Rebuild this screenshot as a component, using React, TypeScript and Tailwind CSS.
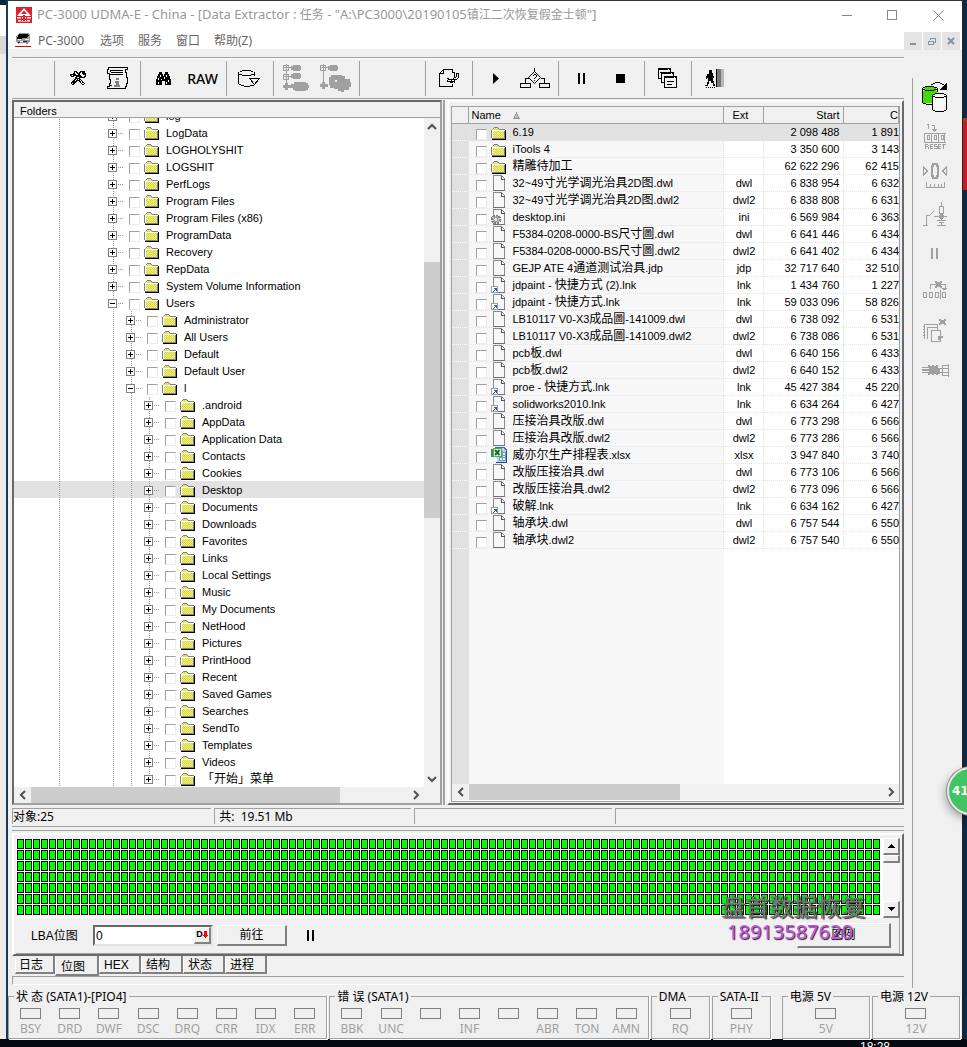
import React, { useState } from 'react';

type TreeItem = { name: string, depth: number, open?: boolean };
type FileItem = { name: string, kind: 'folder' | 'file' | 'link' | 'ini' | 'xls', ext: string, start: string, c: string };

const root = ['log', 'LogData', 'LOGHOLYSHIT', 'LOGSHIT', 'PerfLogs', 'Program Files', 'Program Files (x86)', 'ProgramData', 'Recovery', 'RepData', 'System Volume Information'];
const users = ['Administrator', 'All Users', 'Default', 'Default User'];
const profile = ['.android', 'AppData', 'Application Data', 'Contacts', 'Cookies', 'Desktop', 'Documents', 'Downloads', 'Favorites', 'Links', 'Local Settings', 'Music', 'My Documents', 'NetHood', 'Pictures', 'PrintHood', 'Recent', 'Saved Games', 'Searches', 'SendTo', 'Templates', 'Videos', '「开始」菜单'];

const tree: TreeItem[] = [
  ...root.map((name) => ({ name, depth: 0 })),
  { name: 'Users', depth: 0, open: true },
  ...users.map((name) => ({ name, depth: 1 })),
  { name: 'l', depth: 1, open: true },
  ...profile.map((name) => ({ name, depth: 2 })),
];

const files: FileItem[] = [
  { name: '6.19', kind: 'folder', ext: '', start: '2 098 488', c: '1 891' },
  { name: 'iTools 4', kind: 'folder', ext: '', start: '3 350 600', c: '3 143' },
  { name: '精雕待加工', kind: 'folder', ext: '', start: '62 622 296', c: '62 415' },
  { name: '32~49寸光学调光治具2D图.dwl', kind: 'file', ext: 'dwl', start: '6 838 954', c: '6 632' },
  { name: '32~49寸光学调光治具2D图.dwl2', kind: 'file', ext: 'dwl2', start: '6 838 808', c: '6 631' },
  { name: 'desktop.ini', kind: 'ini', ext: 'ini', start: '6 569 984', c: '6 363' },
  { name: 'F5384-0208-0000-BS尺寸圖.dwl', kind: 'file', ext: 'dwl', start: '6 641 446', c: '6 434' },
  { name: 'F5384-0208-0000-BS尺寸圖.dwl2', kind: 'file', ext: 'dwl2', start: '6 641 402', c: '6 434' },
  { name: 'GEJP ATE 4通道测试治具.jdp', kind: 'file', ext: 'jdp', start: '32 717 640', c: '32 510' },
  { name: 'jdpaint - 快捷方式 (2).lnk', kind: 'link', ext: 'lnk', start: '1 434 760', c: '1 227' },
  { name: 'jdpaint - 快捷方式.lnk', kind: 'link', ext: 'lnk', start: '59 033 096', c: '58 826' },
  { name: 'LB10117 V0-X3成品圖-141009.dwl', kind: 'file', ext: 'dwl', start: '6 738 092', c: '6 531' },
  { name: 'LB10117 V0-X3成品圖-141009.dwl2', kind: 'file', ext: 'dwl2', start: '6 738 086', c: '6 531' },
  { name: 'pcb板.dwl', kind: 'file', ext: 'dwl', start: '6 640 156', c: '6 433' },
  { name: 'pcb板.dwl2', kind: 'file', ext: 'dwl2', start: '6 640 152', c: '6 433' },
  { name: 'proe - 快捷方式.lnk', kind: 'link', ext: 'lnk', start: '45 427 384', c: '45 220' },
  { name: 'solidworks2010.lnk', kind: 'link', ext: 'lnk', start: '6 634 264', c: '6 427' },
  { name: '压接治具改版.dwl', kind: 'file', ext: 'dwl', start: '6 773 298', c: '6 566' },
  { name: '压接治具改版.dwl2', kind: 'file', ext: 'dwl2', start: '6 773 286', c: '6 566' },
  { name: '威亦尔生产排程表.xlsx', kind: 'xls', ext: 'xlsx', start: '3 947 840', c: '3 740' },
  { name: '改版压接治具.dwl', kind: 'file', ext: 'dwl', start: '6 773 106', c: '6 566' },
  { name: '改版压接治具.dwl2', kind: 'file', ext: 'dwl2', start: '6 773 096', c: '6 566' },
  { name: '破解.lnk', kind: 'link', ext: 'lnk', start: '6 634 162', c: '6 427' },
  { name: '轴承块.dwl', kind: 'file', ext: 'dwl', start: '6 757 544', c: '6 550' },
  { name: '轴承块.dwl2', kind: 'file', ext: 'dwl2', start: '6 757 540', c: '6 550' },
];

// Chinese runs stay at 12px whatever the Latin around them is
const Mixed = ({ text }: { text: string }) => (
  <>
    {text.split(/([\u3000-\u9fff]+)/).map((part, i) =>
      i % 2 ? <span key={i} className="text-[12px]">{part}</span> : part
    )}
  </>
);

const Ico = ({ w, h, children }: { w: number, h: number, children: React.ReactNode }) => (
  <svg width={w} height={h} viewBox={`0 0 ${w} ${h}`} fill="none" stroke="currentColor" shapeRendering="crispEdges" className="shrink-0" aria-hidden="true">
    {children}
  </svg>
);

const Folder = () => (
  <Ico w={15} h={13}>
    <path d="M1 2h1V1h5v1h1v1h6v9H1z" fill="url(#dither)" stroke="none" />
    <path d="M.5 11V2.500M2 1.500h1M3 .500h4M7 1.500h1M8 2.500h6M13.500 3v8M1 11.500h13" stroke="#808080" />
    <path d="M1.500 11V3.500h12" stroke="#fff" />
    <path d="M14.500 3v10M1 12.500h14" stroke="#000" />
  </Ico>
);

const FileIcon = ({ kind }: { kind: FileItem['kind'] }) => {
  if (kind === 'folder') return <Folder />;
  if (kind === 'xls') return (
    <Ico w={16} h={16}>
      <path d="M4 .5h9l2.500 2.500v12H6" fill="#b9d3f3" stroke="#3c6ea8" />
      <path d="M5 15.500h11M15.500 4v12" stroke="#1f4e88" />
      <path d="M8 5h6v8H8z" fill="#eaf3ff" stroke="#6f9ad0" />
      <path d="M11 4v9M8 8h6M8 10.500h6" stroke="#6f9ad0" />
      <path d="M0 2h3v8H0z" fill="#2f9a3f" stroke="none" />
      <path d="M2.500 1.500h8v8h-8z" fill="#e9f7e9" stroke="#5aa865" />
      <path d="M4 3l4.500 5M8.500 3L4 8" stroke="#17702a" strokeWidth="2" shapeRendering="auto" />
    </Ico>
  );
  return (
    <Ico w={15} h={16}>
      <path d="M2.500 .5h8l3 3v12h-11z" fill="#f7f7f7" stroke="#8a8a8a" />
      <path d="M10.500 1v3h3" stroke="#555" />
      <path d="M2 15.500h12" stroke="#707070" />
      {kind === 'link' && (
        <>
          <path d="M.5 9.500h6v6h-6z" fill="#fff" stroke="#a0a0a0" />
          <path d="M2 14h1v-1h1v-1H3v-1h3v3H5v-1H4v1H3v1H2z" fill="#1f5fb4" stroke="none" />
        </>
      )}
      {kind === 'ini' && (
        <>
          <circle cx="5" cy="10.500" r="4" fill="#ccc" stroke="#808080" strokeWidth="2" strokeDasharray="2 1" />
          <circle cx="5" cy="10.500" r="2" fill="#e8e8e8" stroke="#999" />
        </>
      )}
    </Ico>
  );
};

const Check = ({ label }: { label: string }) => (
  <input type="checkbox" aria-label={label} className="appearance-none shrink-0 w-[11px] h-[11px] bg-white border border-t-[#a0a0a0] border-l-[#a0a0a0] border-b-[#ececec] border-r-[#ececec] checked:bg-gray-500" />
);

const TreeRow = ({ item, odd, last, selected, onSelect }: { item: TreeItem, odd: boolean, last: boolean, selected: boolean, onSelect: () => void }) => {
  const dash = odd ? 1 : 0;
  return (
    <div onClick={onSelect} className={`flex items-end h-[17px] shrink-0 whitespace-nowrap ${selected ? 'bg-[#e2e2e2]' : ''}`}>
      <Ico w={94} h={17}>
        <path d="M45.500 0v17" stroke="#999" strokeDasharray="1 1" strokeDashoffset={dash} />
      </Ico>
      {Array.from({ length: item.depth }, (_, i) => (
        <Ico key={i} w={18} h={17}>
          <path d="M5.500 0v17" stroke="#999" strokeDasharray="1 1" strokeDashoffset={dash} />
        </Ico>
      ))}
      <Ico w={21} h={17}>
        <path d={last ? 'M5.500 0v9' : 'M5.500 0v17'} stroke="#999" strokeDasharray="1 1" strokeDashoffset={dash} />
        <path d="M10 9.500h6" stroke="#999" strokeDasharray="1 1" />
        <path d="M.5 5.500h8v8h-8z" fill="#fff" stroke="#808080" />
        <path d={item.open ? 'M2 9.500h5' : 'M2 9.500h5M4.500 7v5'} stroke="#000" />
      </Ico>
      <div className="flex items-end gap-1 pb-px">
        <Check label={item.name} />
        <Folder />
      </div>
      <span className="h-4 leading-4 pl-[7px]"><Mixed text={item.name} /></span>
    </div>
  );
};

const Chevron = ({ dir }: { dir: 'up' | 'down' | 'left' | 'right' }) => {
  const d = { up: 'M1 7l4-4 4 4', down: 'M1 3l4 4 4-4', left: 'M7 1L3 5l4 4', right: 'M3 1l4 4-4 4' }[dir];
  return (
    <svg width="10" height="10" viewBox="0 0 10 10" fill="none" stroke="#505050" strokeWidth="2" aria-hidden="true"><path d={d} /></svg>
  );
};

const HScroll = ({ thumb }: { thumb: string }) => (
  <div className="flex h-4 shrink-0 bg-[#f0f0f0]">
    <button aria-label="scroll left" className="w-[17px] flex items-center justify-center"><Chevron dir="left" /></button>
    <div className="flex-1"><div className={`h-full bg-[#cdcdcd] ${thumb}`} /></div>
    <button aria-label="scroll right" className="w-[17px] flex items-center justify-center"><Chevron dir="right" /></button>
  </div>
);

const Tool = ({ label, children }: { label: string, children: React.ReactNode }) => (
  <button aria-label={label} className="w-[39px] h-[35px] flex items-center justify-center">{children}</button>
);

const Section = ({ children }: { children?: React.ReactNode }) => (
  <div className="flex h-[35px] pl-[3px] pr-1 border-r border-[#a0a0a0] shrink-0">{children}</div>
);

const Toolbar = () => (
  <div className="flex items-center h-[42px] shrink-0 border-y border-[#a0a0a0] shadow-[inset_0_1px_0_#fff] overflow-hidden">
    <div className="w-[43px] h-[35px] border-r border-[#a0a0a0] shrink-0" />
    <Section>
      <Tool label="Tools">
        <Ico w={16} h={15}>
          <path d="M4 0h2v1h1v1h1v1h1v1H7v1H6V4H5V3H4v1H3v1H1V4H0V3h3V2h1zM9 1h1V0h4v1h-2v1h1v1h1V2h1v3h-1v1h-3V5h-1V4H9z" fill="#f0f0f0" strokeWidth="1" />
          <path d="M6 5.500l8 8M9.500 5.500l-8 8" strokeWidth="3" />
          <path d="M7 6.500l6.500 6.500M8.500 6.500L2 13" stroke="#f0f0f0" strokeWidth="1" strokeDasharray="1 1" />
        </Ico>
      </Tool>
      <Tool label="Task info">
        <Ico w={22} h={22}>
          <path d="M4 .5h17.500v2h-2v3h1v5h1v6h-1v3h-1v2H1.500v-2h2v-3h1v-4h-1v-6h-2v-4h1v-2z" fill="#f0f0f0" />
          <path d="M4 3.500h13M5 5.500h12M4 7.500h13" />
          <path d="M10 11h3v2h-3zM9 14h4v4h1v2H8v-2h2v-2H9z" fill="#808080" stroke="none" />
          <path d="M3 18.500h3M4 3v2" />
        </Ico>
      </Tool>
    </Section>
    <Section>
      <Tool label="Find">
        <Ico w={15} h={13}>
          <path d="M3 0h3v2h1v2h1V2h1V0h3v2h1v2h1v3h1v6H9V9H6v4H0V7h1V4h1V2h1z" fill="#000" stroke="none" />
          <path d="M2.500 6v2M4.500 3v2M2.500 10v2M10.500 3v2M8.500 5v2M12.500 8v2M10.500 10v2M5.500 7v1" stroke="#fff" />
        </Ico>
      </Tool>
      <button className="w-[39px] h-[35px] flex items-center justify-center font-['Noto_Sans',sans-serif] text-[14px] font-medium">RAW</button>
    </Section>
    <Section>
      <Tool label="Disk image">
        <Ico w={23} h={17}>
          <path d="M4 .5h9M2 1.500h2M13 1.500h2M.5 2v12M1 4.500h3M4 5.500h9M13 4.500h3M16.500 2v4M1 14.500h2M3 15.500h3M6 16.500h6M12 15.500h4" />
          <path d="M11.500 8.500h10l-5 6z" fill="#f0f0f0" />
        </Ico>
      </Tool>
    </Section>
    <Section>
      <Tool label="Expand map">
        <Ico w={27} h={28}>
          <g stroke="#a0a0a0">
            <path d="M3.500 0v20M0 3.500h8M0 12.500h8" /><path d="M.5 1.500h5v5h-5zM.5 10.500h5v5h-5z" />
            <path d="M8 2h2V1h7v1h1v4h-1v1h-7V6H8zM8 10h2V9h7v1h1v4h-1v1h-7v-1H8zM2 19h3v2h3v-1h3v-2h12v1h2v2h1v3h-1v2h-2v1H12v-1h-2v-2H5v2H2v-2H0v-3h2z" fill="#a0a0a0" stroke="none" />
          </g>
        </Ico>
      </Tool>
      <Tool label="Build map">
        <Ico w={32} h={28}>
          <g stroke="#a0a0a0">
            <path d="M3.500 0v20M0 3.500h8" /><path d="M.5 1.500h5v5h-5z" />
            <path d="M8 2h2V1h7v1h1v4h-1v1h-7V6H8zM2 18h3v2h3v3H5v2H2v-2H0v-3h2zM9 13h2v-2h11v1h3v3h5v3h1v5h-2v3h-5v2h-3v-1h-3v-2h-4v-1h-4v-3h-1z" fill="#a0a0a0" stroke="none" />
            <path d="M15 16h2v2h-2z" fill="#f0f0f0" stroke="none" />
          </g>
        </Ico>
      </Tool>
    </Section>
    <div className="w-[66px] h-[35px] border-r border-[#a0a0a0] shrink-0" />
    <Section>
      <Tool label="Export">
        <Ico w={20} h={19}>
          <path d="M4.500 .5h9v3h2v4M4.500 .5l-4 4v13h13v-3M.5 4.500h4v-4" />
          <path d="M17.500 4.500h2v4l-2 2h-2v3l-3-2v-1h2v-1l3-2z" fill="#f0f0f0" />
          <path d="M7.500 9.500h2v1h2M8.500 10.500v2h4M11.500 12.500v1h2" />
        </Ico>
      </Tool>
    </Section>
    <Section>
      <Tool label="Start">
        <Ico w={6} h={11}><path d="M0 0l6 5.500L0 11z" fill="#000" stroke="none" shapeRendering="auto" /></Ico>
      </Tool>
      <Tool label="Logic">
        <Ico w={30} h={21}>
          <path d="M14.500 0v4M.5 15.500h10v4H.5zM19.500 15.500h10v4h-10zM5.500 15v-5h4M24.500 15v-5h-4" />
          <path d="M14.500 3.500l6 6-6 6-6-6z" shapeRendering="auto" />
          <path d="M13 7.500h1M14 6.500h2M16.500 7v2M15 9.500h1M14.500 10v1M14.500 12v1" />
        </Ico>
      </Tool>
    </Section>
    <Section>
      <Tool label="Pause"><Ico w={8} h={11}><path d="M0 0h2v11H0zM5 0h2v11H5z" fill="#000" stroke="none" /></Ico></Tool>
      <Tool label="Stop"><Ico w={9} h={9}><path d="M0 0h9v9H0z" fill="#000" stroke="none" /></Ico></Tool>
    </Section>
    <Section>
      <Tool label="Windows">
        <Ico w={19} h={20}>
          <path d="M.5 .5h12v10H.5z" fill="#f0f0f0" /><path d="M1 1.500h11" /><path d="M10 1h1v1h-1z" fill="#fff" stroke="none" /><path d="M2 4.500h1" />
          <path d="M3.500 4.500h12v10h-12z" fill="#f0f0f0" /><path d="M4 5.500h11" /><path d="M13 5h1v1h-1z" fill="#fff" stroke="none" />
          <path d="M6.500 8.500h12v11h-12z" fill="#f0f0f0" /><path d="M7 9.500h11" /><path d="M16 9h1v1h-1z" fill="#fff" stroke="none" />
          <path d="M9 13.500h7M9 16.500h5" />
        </Ico>
      </Tool>
    </Section>
    <div className="pl-[3px]">
      <Tool label="Exit">
        <Ico w={19} h={19}>
          <path d="M4 1h3v3h1v3h1v2H8v3h1v3h1v2H8v-3H6v-2H4v3H3v2H0v-1h2v-3h1V9H2v1H1V7h1V5h2z" fill="#000" stroke="none" />
          <path d="M12 0h4v18h-4z" fill="#777" stroke="none" />
          <path d="M16 0h3v18h-3z" fill="#b8b8b8" stroke="none" />
          <path d="M1 18.500h9" strokeDasharray="1 1" />
          <path d="M11.500 0v18" />
        </Ico>
      </Tool>
    </div>
  </div>
);

const FoldersPanel = () => {
  const [selected, setSelected] = useState('Desktop');
  return (
    <div className="flex-[426] min-w-0 flex flex-col bg-white border-2 border-t-[#696969] border-l-[#696969] border-r-[#a0a0a0] border-b-[#a0a0a0]">
      <div className="h-4 leading-[18px] pl-[6px] shrink-0 bg-[#f0f0f0] border-b border-[#a0a0a0]">Folders</div>
      <div className="flex-1 min-h-0 flex">
        <div className="flex-1 min-w-0 overflow-hidden flex flex-col justify-end">
          {tree.map((item, i) => (
            <TreeRow key={item.name} item={item} odd={i % 2 === 1} last={i === tree.length - 1} selected={selected === item.name} onSelect={() => setSelected(item.name)} />
          ))}
        </div>
        <div className="w-4 shrink-0 bg-[#f0f0f0] flex flex-col">
          <button aria-label="scroll up" className="h-[17px] flex items-center justify-center"><Chevron dir="up" /></button>
          <div className="flex-1 flex flex-col">
            <div className="flex-[127]" />
            <div className="flex-[255] bg-[#cdcdcd]" />
            <div className="flex-[252]" />
          </div>
          <button aria-label="scroll down" className="h-[17px] flex items-center justify-center"><Chevron dir="down" /></button>
        </div>
      </div>
      <div className="pr-4 bg-[#f0f0f0]"><HScroll thumb="w-[82%]" /></div>
    </div>
  );
};

const head = 'h-[17px] p-0 font-normal bg-[#f0f0f0] border-r border-b border-[#a0a0a0] leading-[16px]';
const cell = 'p-0 h-[17px] border-b border-r border-dotted border-[#e4e4e4] leading-[16px]';

const FilesPanel = () => (
  <div className="flex-[448] min-w-0 flex flex-col border-2 border-l-white border-t-white border-r-[#696969] border-b-[#696969] pt-1 pb-px pl-[2px] pr-[2px]">
    <div className="flex-1 min-h-0 flex flex-col border border-[#a0a0a0] bg-white overflow-hidden pb-px">
      <div className="flex-1 min-h-0 overflow-hidden">
        <table className="table-fixed w-full h-full border-separate border-spacing-0 whitespace-nowrap">
          <colgroup>
            <col className="w-[17px]" /><col className="w-[255px]" /><col className="w-[40px]" /><col className="w-[80px]" /><col />
          </colgroup>
          <thead>
            <tr>
              <th className={head} aria-label="marker"></th>
              <th className={`${head} text-left pl-[2px]`}>
                <span className="flex items-center gap-3">Name
                  <Ico w={7} h={7}><path d="M3.500 1L6 6H1z" fill="#c0c0c0" stroke="#909090" /></Ico>
                </span>
              </th>
              <th className={`${head} text-left pl-2`}>Ext</th>
              <th className={`${head} text-right pr-1`}>Start</th>
              <th className={`${head} text-right`}>C</th>
            </tr>
          </thead>
          <tbody>
            {files.map((f, i) => {
              const tone = i === 0 ? 'bg-[#e2e2e2]' : '';
              return (
                <tr key={f.name} className={tone}>
                  <td className={`${cell} bg-[#e1e1e1] border-b-white`}></td>
                  <td className={`${cell} ${i ? 'bg-[#f7f7f7]' : ''}`}>
                    <div className="flex items-end h-4 pl-[7px]">
                      <Check label={f.name} />
                      <span className="w-[21px] pl-1 flex"><FileIcon kind={f.kind} /></span>
                      <span className="pl-1 h-4"><Mixed text={f.name} /></span>
                    </div>
                  </td>
                  <td className={`${cell} text-center`}>{f.ext}</td>
                  <td className={`${cell} text-right pr-1`}>{f.start}</td>
                  <td className="p-0 h-[17px] border-b border-dotted border-[#e4e4e4] leading-[16px] text-right">{f.c}</td>
                </tr>
              );
            })}
            <tr>
              <td className="p-0 bg-[#e1e1e1]"></td>
              <td className="p-0 bg-[#f7f7f7]"></td>
              <td className="p-0 h-full" colSpan={3}></td>
            </tr>
          </tbody>
        </table>
      </div>
      <HScroll thumb="w-[51%]" />
    </div>
  </div>
);

const raised = 'bg-[#f0f0f0] border-t border-l border-b-2 border-r-2 border-t-white border-l-white border-b-[#808080] border-r-[#808080]';

const MapPanel = () => (
  <div className="shrink-0 mt-[2px] border-2 border-t-white border-l-white border-r-[#696969] border-b-[#696969] pl-[2px] pr-[2px] pt-[3px]">
    <div className="flex h-20 bg-white">
      {/* one cell per block of sectors */}
      <svg className="flex-1 min-w-0 h-[79px]" shapeRendering="crispEdges" aria-label="sector map">
        <defs>
          <pattern id="sector" width="8" height="11" patternUnits="userSpaceOnUse">
            <rect x="1" y="1" width="7" height="10" fill="#000" />
            <rect x="2" y="2" width="5" height="8" fill="#0f0" />
          </pattern>
        </defs>
        <rect width="865" height="77" fill="url(#sector)" />
      </svg>
      <div className="w-[17px] flex flex-col bg-[#f7f7f7]">
        <button aria-label="map up" className={`h-[17px] flex items-center justify-center ${raised}`}><Ico w={7} h={4}><path d="M3 0h1v1h1v1h1v1h1v1H0V3h1V2h1V1h1z" fill="#000" stroke="none" /></Ico></button>
        <div className={`h-2 ${raised}`} />
        <div className="flex-1" />
        <button aria-label="map down" className={`h-[17px] flex items-center justify-center ${raised}`}><Ico w={7} h={4}><path d="M0 0h7v1H6v1H5v1H4v1H3V3H2V2H1V1H0z" fill="#000" stroke="none" /></Ico></button>
      </div>
    </div>
    <div className="h-9 flex items-center border-b border-r border-[#a0a0a0] pl-[15px]">
      <label htmlFor="lba" className="w-[62px] text-[12px]">LBA位图</label>
      <div className="flex w-[120px] h-[21px] border-2 border-t-[#696969] border-l-[#696969] border-r-[#e3e3e3] border-b-[#e3e3e3] bg-white">
        <input id="lba" defaultValue="0" className="flex-1 min-w-0 pl-px text-[12px] leading-4 outline-none bg-white" />
        <button aria-label="decimal" className={`w-[17px] flex items-center justify-center text-[9px] font-black ${raised}`}>
          D<Ico w={5} h={8}><path d="M1 0h3v4h1v1H4v1H3v1H2V6H1V5H0V4h1z" fill="#f00" stroke="none" /></Ico>
        </button>
      </div>
      <button className={`ml-1 w-[70px] h-[21px] text-[12px] leading-4 ${raised}`}>前往</button>
      <button aria-label="pause map" className="ml-5 h-5 w-2 flex items-center"><Ico w={8} h={11}><path d="M0 0h2v11H0zM5 0h2v11H5z" fill="#000" stroke="none" /></Ico></button>
      <button className={`ml-auto mr-2 w-[94px] h-[25px] text-[12px] leading-4 ${raised}`}>图例</button>
    </div>
  </div>
);

const tabs = ['日志', '位图', 'HEX', '结构', '状态', '进程'];

const Tabs = () => {
  const [active, setActive] = useState('位图');
  return (
    <div role="tablist" className="flex items-start h-5 shrink-0 pl-[3px] text-[12px] leading-4">
      {tabs.map((t) => (
        <button
          key={t}
          role="tab"
          aria-selected={t === active}
          onClick={() => setActive(t)}
          className={`text-left border-l border-r-2 border-b-2 border-l-white border-r-[#808080] border-b-[#808080] ${t === active ? 'w-11 h-5 pt-[3px] pl-[5px] bg-[#f0f0f0]' : t === '日志' ? 'w-10 h-[18px] pt-px pl-[3px] border-r-0' : 'w-[42px] h-[18px] pt-px pl-1'}`}
        >
          {t}
        </button>
      ))}
    </div>
  );
};

const Leds = ({ title, names, className }: { title: string, names: string[], className: string }) => (
  <fieldset className={`min-w-0 h-[51px] border border-[#a0a0a0] shadow-[1px_1px_0_#fff] px-[2px] ${className}`}>
    <legend className="ml-[3px] px-[2px] h-4 leading-[18px] whitespace-nowrap">{title}</legend>
    <div className="flex pt-1">
      {names.map((n, i) => (
        <div key={i} className="flex-1 flex flex-col items-center text-[#a0a0a0]">
          <span className="w-[21px] h-[11px] border border-[#808080]" />
          <span className="h-4 mt-[2px] leading-4">{n}</span>
        </div>
      ))}
    </div>
  </fieldset>
);

const Sidebar = () => (
  <div className="w-[58px] shrink-0 flex flex-col">
    <div className="flex-1 mt-[29px] ml-2 border-l border-[#a0a0a0] flex flex-col items-center gap-4 pt-1 pr-[5px] text-[#a0a0a0]">
      <button aria-label="Copy disk">
        <Ico w={26} h={30}>
          <path d="M2 5h12v15H2z" fill="#3fdc00" stroke="none" />
          <path d="M3 4.500h9M1 5.500h2M12 5.500h3M.5 6v15M15.500 6v4M3 8.500h9M1 7.500h2M12 7.500h3M1 21.500h3M4 22.500h6" stroke="#000" />
          <path d="M1 9h14v2h-5v10H1z" fill="#3fdc00" stroke="none" />
          <path d="M11 12h13v16H11z" fill="#f8f8f8" stroke="none" />
          <path d="M13 11.500h9M11 12.500h2M22 12.500h2M10.500 13v15M24.500 13v15M11 14.500h2M13 15.500h9M22 14.500h2M11 28.500h2M13 29.500h9M22 28.500h2" stroke="#000" />
          <path d="M9 2.500h2M11 1.500h2M13 .5h5M18 1.500h2M20 2.500h2" stroke="#000" />
          <path d="M25 0v8h-8z" fill="#000" stroke="none" />
        </Ico>
      </button>
      <button aria-label="Reset counter" className="-mt-[5px]">
        <Ico w={22} h={26}>
          <path d="M3 1.500h2M4.500 1v5M8 2.500h3M10.500 3v6M8 6.500h5M9 7.500h3" />
          <path d="M22 10.500H.5v9H22M7.500 10v10M14.500 10v10M20.500 10v10" />
          <path d="M3.500 12.500h1.500v4H3.500zM10.500 12.500h1.500v4h-1.500zM17.500 12.500h1.500v4h-1.500z" />
          <path d="M1.500 21v5M2 21.500h2M4.500 22v1M2 23.500h2M4.500 24v2M6.500 21v5M7 21.500h2M7 23.500h2M7 25.500h2M13 21.500h-2.500v2H13v2h-3M14.500 21v5M15 21.500h2M15 23.500h2M15 25.500h2M18 21.500h4M19.500 22v4" />
        </Ico>
      </button>
      <button aria-label="Zero position" className="-mt-[3px]">
        <Ico w={24} h={26}>
          <path d="M.5 5v8l4-4zM23.500 5v8l-4-4z" />
          <path d="M9 4h1V2h4v2h1v10h-1v2h-4v-2H9z" strokeWidth="2" />
          <path d="M3 25.500h19M3.500 20v5M7.500 22v3M11.500 22v3M15.500 22v3M18.500 22v3M21.500 20v5" />
        </Ico>
      </button>
      <button aria-label="Power switch" className="-mt-[2px]">
        <Ico w={24} h={24}>
          <path d="M18.500 0v4M16.500 4.500h4v7h-4zM18.500 12v6M11 14.500h13M14 18.500h9M16 20.500h5M14 23.500h9M18.500 20v3" />
          <path d="M18.500 12l3 2.500-3 2.500-3-2.500z" fill="#a0a0a0" />
          <path d="M0 23.500h5M3.500 23V13.500h3l4-4" />
        </Ico>
      </button>
      <button aria-label="Pause" className="mt-[6px]"><Ico w={8} h={11}><path d="M0 0h2v11H0zM5 0h2v11H5z" fill="#a0a0a0" stroke="none" /></Ico></button>
      <button aria-label="Skip block" className="mt-[6px]">
        <Ico w={24} h={18}>
          <path d="M.5 11.500h3v5h-3zM6.500 11.500h3v5h-3zM12.500 11.500h3v5h-3zM19.500 11.500h3v5h-3zM17.500 9v9" />
          <path d="M7.500 8V3.500h15V8" />
          <path d="M12 0h2v1h3V0h2v2h-1v3h1v2h-2V6h-3v1h-2V5h1V2h-1zM19 7h5v1h-1v1h-3V8h-1z" fill="#a0a0a0" stroke="none" />
        </Ico>
      </button>
      <button aria-label="Copy blocks" className="mt-1">
        <Ico w={24} h={23}>
          <path d="M1.500 5v15M2 5.500h12V8M0 7.500h2M0 10.500h2M0 13.500h2M0 16.500h2M4.500 20V8.500h10V11" />
          <path d="M8.500 11.500h9v11h-9z" />
          <path d="M16 0h2v1h3V0h2v2h-1v2h1v2h-2V5h-3v1h-2V4h1V2h-1zM15 17h5v2h-2v2h-3z" fill="#a0a0a0" stroke="none" />
        </Ico>
      </button>
      <button aria-label="Connector" className="mt-[6px]">
        <Ico w={27} h={13}>
          <path d="M0 3h6V1h2v1h2V1h2v1h2V1h2v3h2v6h-2v1h-2v-1h-2v1h-2v-1H8v1H6V9H0V8h7V7H0V5h7V4H0z" fill="#a0a0a0" stroke="none" />
          <path d="M26.500 0v13M20 1.500h6M20.500 1v11M20 11.500h6M18 4.500h8M18 8.500h8" />
        </Ico>
      </button>
    </div>
  </div>
);

const mdi = 'w-[18px] h-[18px] bg-[#e4e4e4] flex items-center justify-center text-[#8094a8]';

export default function App() {
  return (
    <div className="relative h-screen min-h-[640px] flex flex-col overflow-hidden bg-[#050a10] text-black text-[11px] font-['Liberation_Sans','Noto_Sans_CJK_SC',sans-serif]">
      <svg width="0" height="0" className="absolute" aria-hidden="true">
        <defs>
          <pattern id="dither" width="2" height="2" patternUnits="userSpaceOnUse">
            <rect width="2" height="2" fill="#ff0" /><rect x="1" width="1" height="1" fill="#c8c8c8" /><rect y="1" width="1" height="1" fill="#c8c8c8" />
          </pattern>
        </defs>
      </svg>
      <div className="flex-1 min-h-0 flex">
        {/* edge of the window behind, with the desktop showing */}
        <div className="w-2 shrink-0 flex">
          <div className="w-[6px] flex flex-col">
            <div className="h-[5px] bg-[#0a2540]" />
            <div className="h-[31px] bg-white" />
            <div className="h-[18px] bg-[#d8d8d8]" />
            <div className="flex-1 bg-[#ececec]" />
          </div>
          <div className="w-[2px] bg-[#163a58]" />
        </div>

        <div className="flex-1 min-w-0 flex flex-col bg-[#f0f0f0] border-t border-[#333]">
          <header className="bg-white shrink-0 font-['Noto_Sans','Noto_Sans_CJK_SC',sans-serif] text-[12px]">
            <div className="flex items-center h-[31px] pb-[3px] pl-2 text-[#999]">
              <svg width="16" height="16" viewBox="0 0 16 16" aria-hidden="true">
                <rect width="16" height="16" fill="#e0202a" />
                <path d="M8 1L1 9h14zM1 10h14v1.500H1zM2 13h12v1.500H2z" fill="#fff" />
                <path d="M8 3.500L5 7h6zM7 8h2v6H7zM5 9.500h1V14H5zM10 9.500h1V14h-1z" fill="#e0202a" />
              </svg>
              <h1 className="pl-[5px] whitespace-nowrap text-[13px]"><Mixed text={'PC-3000 UDMA-E - China - [Data Extractor : 任务 - "A:\\PC3000\\20190105镇江二次恢复假金士顿"]'} /></h1>
              <div className="ml-auto flex text-[#888]">
                <button aria-label="Minimize" className="w-[45px] h-7 flex items-center justify-center"><Ico w={11} h={11}><path d="M0 5.500h10" /></Ico></button>
                <button aria-label="Maximize" className="w-[45px] h-7 flex items-center justify-center"><Ico w={11} h={11}><path d="M.5 .5h9v9h-9z" /></Ico></button>
                <button aria-label="Close" className="w-[47px] h-7 flex items-center justify-center"><svg width="11" height="11" viewBox="0 0 11 11" stroke="currentColor" aria-hidden="true"><path d="M.5 .5l10 10M10.500 .5l-10 10" /></svg></button>
              </div>
            </div>
            <nav className="flex items-center h-[17px] pl-[7px] pr-[2px] text-[#666]">
              <svg width="16" height="15" viewBox="0 0 16 15" shapeRendering="crispEdges" aria-hidden="true">
                <path d="M2 2l3-2h9l1 2v6l-3 3H3L1 9V5z" fill="#999" />
                <path d="M4 1h9l1 2-3 2H8L5 7H3L2 5z" fill="#000" />
                <path d="M3 6h3M5 8h4M10 6h4M4 10h7" stroke="#eee" />
                <path d="M8 8h4M3 9h2" stroke="#222" />
                <path d="M0 12h16v2H0z" fill="#fff" />
                <path d="M0 13.500h16" stroke="#e00000" />
              </svg>
              <a href="#main" className="pl-[7px] w-[61px]">PC-3000</a>
              <a href="#options" className="pl-2 w-[46px]">选项</a>
              <a href="#service" className="w-[38px]">服务</a>
              <a href="#window" className="w-[38px]">窗口</a>
              <a href="#help">帮助(Z)</a>
              <div className="ml-auto flex gap-px">
                <button aria-label="Minimize child" className={mdi}><Ico w={6} h={8}><path d="M0 7h6" strokeWidth="2" /></Ico></button>
                <button aria-label="Restore child" className={mdi}><Ico w={8} h={8}><path d="M2 1h6M7.500 1v4M6 5.500h2M2.500 1v2M.5 4.500h5v3h-5zM0 4h6" /></Ico></button>
                <button aria-label="Close child" className={mdi}><svg width="8" height="8" viewBox="0 0 8 8" stroke="currentColor" strokeWidth="2" aria-hidden="true"><path d="M1 1l6 6M7 1L1 7" /></svg></button>
              </div>
            </nav>
          </header>

          <div className="flex-1 min-h-0 flex">
            <div className="flex-1 min-w-0 flex flex-col pt-2 pl-1">
              <Toolbar />
              <div className="flex-1 min-h-0 flex pt-px">
                <FoldersPanel />
                <div className="w-[3px] shrink-0 border-l-2 border-r border-l-[#a0a0a0] border-r-white mx-px" />
                <FilesPanel />
              </div>
              <div className="flex gap-[3px] h-[22px] shrink-0 pt-[3px] pb-[2px] font-['Noto_Sans','Noto_Sans_CJK_SC',sans-serif] text-[12px] leading-4 border-b border-[#a0a0a0]">
                <div className="flex-[198] border-t border-l border-[#a0a0a0]">对象:25</div>
                <div className="flex-[192] pl-1 border-t border-l border-[#a0a0a0] whitespace-pre">共:  19.51 Mb</div>
                <div className="flex-[196] border-t border-l border-[#a0a0a0]" />
                <div className="flex-[288] border-t border-l border-[#a0a0a0]" />
              </div>
              <div className="h-1 shrink-0 border-b border-[#a0a0a0]" />
              <MapPanel />
              <Tabs />
              <div className="h-[9px] shrink-0 border-t border-l border-[#a0a0a0] border-b border-b-white" />
              <div className="h-[3px] shrink-0" />
            </div>
            <Sidebar />
          </div>

          <footer className="flex gap-[2px] pr-[2px] shrink-0 font-['Noto_Sans','Noto_Sans_CJK_SC',sans-serif] text-[12px]">
            <Leds title="状 态 (SATA1)-[PIO4]" names={['BSY', 'DRD', 'DWF', 'DSC', 'DRQ', 'CRR', 'IDX', 'ERR']} className="flex-[313]" />
            <Leds title="错 误 (SATA1)" names={['BBK', 'UNC', '', 'INF', '', 'ABR', 'TON', 'AMN']} className="flex-[313]" />
            <Leds title="DMA" names={['RQ']} className="flex-[53]" />
            <Leds title="SATA-II" names={['PHY']} className="flex-[53]" />
            <Leds title="电源 5V" names={['5V']} className="flex-[82] ml-[9px]" />
            <Leds title="电源 12V" names={['12V']} className="flex-[82]" />
          </footer>
        </div>

        <div className="w-[5px] shrink-0 bg-[#062a50] border-l-2 border-[#222]" />
      </div>
      <div className="h-2 shrink-0 overflow-hidden text-right pr-[77px] text-white text-[12px] leading-4">18:28</div>

      <div className="absolute right-0 top-[118px] w-1 h-[72px] bg-[#c41c24] border-t-4 border-[#a04010]" />
      <div className="absolute -right-[28px] bottom-[232px] w-[48px] h-[48px] rounded-full bg-[#43c463] border-2 border-[#e8e8e8] shadow-[0_0_0_1px_#888,-2px_4px_8px_rgba(0,0,0,0.3)] pl-[3px] leading-[44px] text-[12px] font-bold text-white font-['DejaVu_Sans',sans-serif]">41</div>
      <div className="absolute right-[101px] bottom-[103px] w-[145px] pointer-events-none whitespace-nowrap font-['Noto_Sans','Noto_Sans_CJK_SC',sans-serif]">
        <div className="text-[24px] leading-[26px] text-[#777] [text-shadow:2px_1px_1px_#333]">盘首数据恢复</div>
        <div className="pl-[6px] text-[20px] leading-[24px] text-[#c552f0] [text-shadow:1px_1px_1px_#222]">18913587620</div>
      </div>
    </div>
  );
}
